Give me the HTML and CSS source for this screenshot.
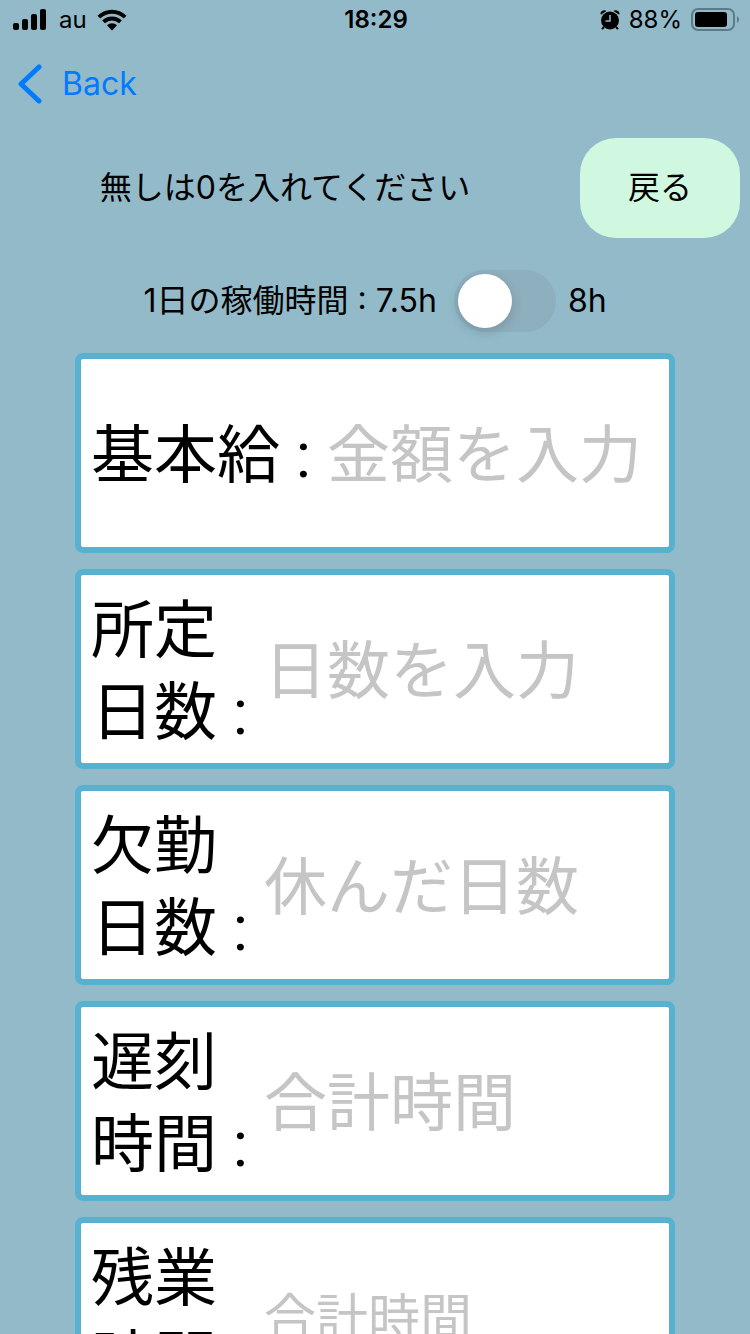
FILE: index.html
```html
<!DOCTYPE html>
<html lang="ja">
<head>
    <meta charset="UTF-8">
    <meta name="viewport" content="width=device-width, initial-scale=1.0">
    <title>給料計算</title>
    <link rel="stylesheet" href="styles.css">
</head>
<body>

<div class="status-bar">
    <div class="status-left">
        <svg class="signal" width="34" height="22" viewBox="0 0 34 22">
            <rect x="0" y="14" width="6" height="7" rx="2"/>
            <rect x="9" y="10" width="6" height="11" rx="2"/>
            <rect x="18" y="5" width="6" height="16" rx="2"/>
            <rect x="27" y="0" width="6" height="21" rx="2"/>
        </svg>
        <span>au</span>
        <svg class="wifi" width="30" height="22" viewBox="0 0 30 22">
            <path d="M0.500 6.800A20.500 20.500 0 0 1 29.500 6.800L26.700 9.600A16.500 16.500 0 0 0 3.300 9.600Z"/>
            <path d="M5.200 11.500A13.800 13.800 0 0 1 24.800 11.500L22 14.300A9.900 9.900 0 0 0 8 14.300Z"/>
            <path d="M10 16.300A7 7 0 0 1 20 16.300L15 21.500Z"/>
        </svg>
    </div>
    <div class="status-time">18:29</div>
    <div class="status-right">
        <svg class="alarm" width="20" height="20" viewBox="0 0 20 20">
            <circle cx="10" cy="10.500" r="9"/>
            <path d="M0.800 4.800Q0 2 2 0.900Q4.400 -0.500 6.500 1Z"/>
            <path d="M19.200 4.800Q20 2 18 0.900Q15.600 -0.500 13.500 1Z"/>
            <path class="alarm-leg" d="M4 17L2 19.200M16 17L18 19.200"/>
            <path class="alarm-hand" d="M10 5V11H5.500"/>
        </svg>
        <span>88%</span>
        <svg class="battery" width="48" height="24" viewBox="0 0 48 24">
            <rect class="battery-frame" x="1" y="1" width="42" height="21" rx="6"/>
            <rect x="4" y="4" width="32" height="15" rx="3"/>
            <path class="battery-cap" d="M46 8Q48 9.500 48 11.500Q48 13.500 46 15Z"/>
        </svg>
    </div>
</div>

<nav class="nav-bar">
    <a class="back-link" href="#">
        <svg width="24" height="40" viewBox="0 0 24 40">
            <path d="M21 3L3 20L21 37"/>
        </svg>
        Back
    </a>
</nav>

<main class="content">
    <div class="top-row">
        <p class="note">無しは0を入れてください</p>
        <button class="return-button" type="button">戻る</button>
    </div>

    <div class="hours-row">
        <label for="hours">1日の稼働時間 : 7.5h</label>
        <input class="switch" type="checkbox" role="switch" id="hours">
        <label for="hours">8h</label>
    </div>

    <form class="fields">
        <div class="field">
            <label for="base">基本給 :</label>
            <input type="text" id="base" placeholder="金額を入力">
        </div>
        <div class="field">
            <label for="days">所定<br>日数 :</label>
            <input type="text" id="days" placeholder="日数を入力">
        </div>
        <div class="field">
            <label for="absence">欠勤<br>日数 :</label>
            <input type="text" id="absence" placeholder="休んだ日数">
        </div>
        <div class="field">
            <label for="late">遅刻<br>時間 :</label>
            <input type="text" id="late" placeholder="合計時間">
        </div>
        <div class="field">
            <label for="overtime">残業<br>時間 :</label>
            <input class="small" type="text" id="overtime" placeholder="合計時間">
        </div>
    </form>
</main>

</body>
</html>
```

FILE: styles.css
```css
* {
    box-sizing: border-box;
}
body {
    margin: 0;
    height: 100vh;
    display: flex;
    flex-direction: column;
    background-color: #92bac9;
    color: #000;
    font-family: Inter, "Noto Sans CJK JP", sans-serif;
    font-size: 32px;
    line-height: 40px;
}
input,
button {
    font-family: inherit;
    line-height: inherit;
    color: inherit;
}
.status-bar {
    display: grid;
    grid-template-columns: 1fr auto 1fr;
    align-items: center;
    height: 40px;
    flex-shrink: 0;
    padding: 0 11px 0 13px;
    font-size: 24px;
}
.status-left,
.status-right {
    display: flex;
    align-items: center;
}
.status-left {
    gap: 12px;
}
.status-right {
    justify-content: flex-end;
    gap: 9px;
}
.wifi {
    margin-left: -2px;
}
.status-time {
    font-weight: 600;
}
.alarm-leg {
    stroke: #000;
    stroke-width: 2;
}
.alarm-hand {
    fill: none;
    stroke: #92bac9;
    stroke-width: 1.5;
}
.battery-frame {
    fill: none;
    stroke: #5b7b87;
    stroke-width: 2;
}
.battery-cap {
    fill: #5b7b87;
}
.nav-bar {
    display: flex;
    align-items: center;
    height: 88px;
    flex-shrink: 0;
    padding: 0 18px;
}
.back-link {
    display: flex;
    align-items: center;
    gap: 20px;
    color: #007aff;
    text-decoration: none;
}
.back-link path {
    fill: none;
    stroke: #007aff;
    stroke-width: 5;
    stroke-linecap: round;
    stroke-linejoin: round;
}
.content {
    flex: 1;
    min-height: 0;
    overflow-y: auto;
    scrollbar-width: none;
}
.top-row {
    display: flex;
    align-items: center;
    gap: 10px;
    padding: 10px 10px 0 0;
}
.note {
    flex: 1;
    margin: 0;
    text-align: center;
}
.return-button {
    width: 160px;
    height: 100px;
    border: none;
    border-radius: 36px;
    background-color: #d0f8e0;
    font-size: 32px;
    cursor: pointer;
}
.hours-row {
    display: flex;
    justify-content: center;
    align-items: center;
    padding: 32px 0 21px;
}
.switch {
    appearance: none;
    width: 102px;
    height: 62px;
    margin: 0 12px 0 17px;
    padding: 4px;
    border-radius: 31px;
    background-color: #8eafbe;
    cursor: pointer;
}
.switch::before {
    content: "";
    display: block;
    width: 54px;
    height: 54px;
    border-radius: 50%;
    background-color: #fff;
    box-shadow: 0 4px 12px rgba(0, 0, 0, 0.15);
}
.switch:checked {
    background-color: #34c759;
}
.switch:checked::before {
    margin-left: auto;
}
.fields {
    display: flex;
    flex-direction: column;
    gap: 16px;
    width: 80%;
    margin: 0 auto;
}
.field {
    display: flex;
    align-items: center;
    gap: 16px;
    height: 200px;
    padding: 6px 10px 0;
    border: 6px solid #57b1d0;
    border-radius: 8px;
    background-color: #fff;
    font-family: Roboto, "Noto Sans CJK JP", sans-serif;
    font-size: 63px;
    line-height: 82px;
}
.field label {
    flex-shrink: 0;
}
.field input {
    flex: 1;
    min-width: 0;
    padding: 0;
    border: none;
    outline: none;
    background: none;
    font-size: 63px;
}
.field .small {
    font-size: 52px;
}
.field input::placeholder {
    color: #c5c5c5;
    opacity: 1;
}
```
